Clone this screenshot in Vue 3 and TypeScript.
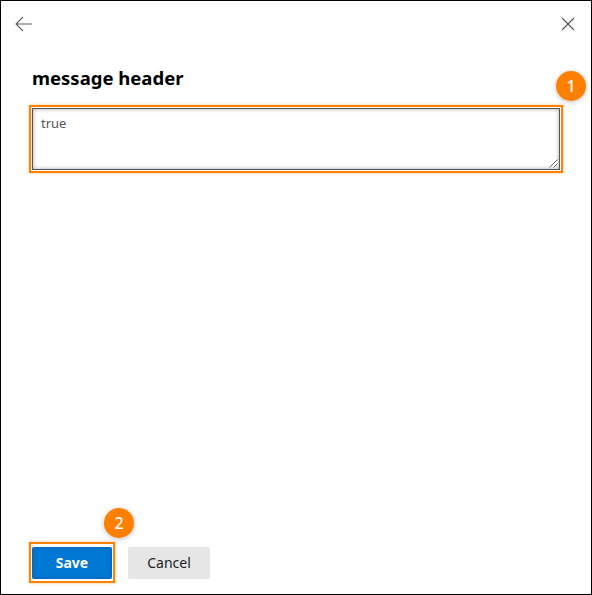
<script setup lang="ts">
const title = 'message header'
const value = 'true'
</script>

<template>
  <div class="frame">
    <header class="topbar">
      <svg class="icon" width="18" height="16" viewBox="0 0 18 16" aria-label="Back">
        <path d="M17 8H1.2M8 1L1 8l7 7" fill="none" stroke="#5f5f5f" stroke-width="1.1" />
      </svg>
      <svg class="icon" width="14" height="14" viewBox="0 0 14 14" aria-label="Close">
        <path d="M1 1l12 12M13 1L1 13" fill="none" stroke="#555" stroke-width="1.1" />
      </svg>
    </header>

    <main class="content">
      <h1 class="title">{{ title }}</h1>
      <div class="field highlight">
        <span class="field-text">{{ value }}</span>
        <svg class="grip" width="9" height="9" viewBox="0 0 9 9">
          <path d="M0.5 8.5L8.5 0.5M4.5 8.5L8.5 4.5" fill="none" stroke="#6b6b6b" stroke-width="1" />
        </svg>
        <span class="badge badge-one">1</span>
      </div>
    </main>

    <footer class="actions">
      <button class="btn primary highlight" type="button">
        Save
        <span class="badge badge-two">2</span>
      </button>
      <button class="btn secondary" type="button">Cancel</button>
    </footer>
  </div>
</template>

<style>
html, body { margin: 0; background: #fff; }
</style>

<style scoped>
.frame {
  box-sizing: border-box;
  width: 592px;
  height: 595px;
  border: 1px solid #000;
  background: #fff;
  display: flex;
  flex-direction: column;
  font-family: "Noto Sans", "Open Sans", sans-serif;
}
.topbar {
  display: flex;
  justify-content: space-between;
  align-items: center;
  padding: 15px 16px 0 14px;
  height: 16px;
}
.icon { display: block; }
.content {
  flex: 1;
  padding: 34px 31px 0;
}
.title {
  margin: 0;
  font-size: 18.5px;
  line-height: 24px;
  font-weight: 700;
  color: #000;
}
.highlight::before {
  content: "";
  position: absolute;
  inset: -4px;
  border: 2px solid #ff8205;
  box-shadow: 0 0 3px rgba(255, 130, 5, 0.45);
  pointer-events: none;
}
.primary.highlight::before {
  inset: -5px -3px -4px;
}
.field {
  position: relative;
  box-sizing: border-box;
  margin-top: 18px;
  width: 528px;
  height: 62px;
  border: 1px solid #555;
  padding: 5px 8px;
  box-shadow: inset 0 0 4px rgba(0, 0, 0, 0.35);
}
.field-text {
  font-size: 13px;
  line-height: 18px;
  color: #555;
  display: block;
}
.grip {
  position: absolute;
  right: 1px;
  bottom: 1px;
}
.actions {
  display: flex;
  gap: 16px;
  padding: 0 0 15px 31px;
}
.btn {
  box-sizing: border-box;
  height: 32px;
  border: 0;
  border-radius: 2px;
  font-family: inherit;
  font-size: 14px;
  line-height: 20px;
  padding: 0;
}
.primary {
  position: relative;
  width: 80px;
  background: #0078d4;
  color: #fff;
  font-weight: 700;
  box-shadow: inset 0 0 4px rgba(0, 40, 90, 0.35);
}
.secondary {
  width: 82px;
  background: #e6e6e6;
  color: #201f1e;
}
.badge {
  position: absolute;
  width: 30px;
  height: 30px;
  border-radius: 50%;
  background: #ff8000;
  color: #fff;
  font-size: 16px;
  line-height: 30px;
  font-weight: 500;
  text-align: center;
  box-shadow: 0 1px 5px rgba(0, 0, 0, 0.25);
}
.badge-one {
  left: 523px;
  top: -38px;
}
.badge-two {
  left: 72px;
  top: -39px;
}
</style>
